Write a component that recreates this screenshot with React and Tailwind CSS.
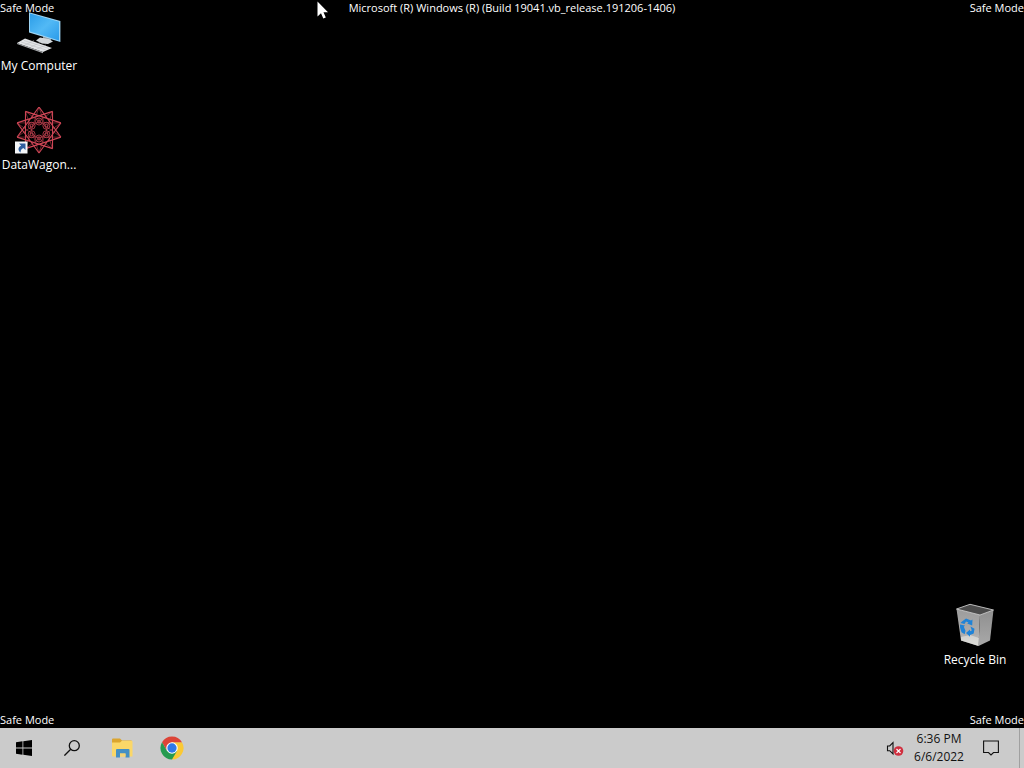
function starPath(cx, cy, r, n, step, phase) {
  let d = "";
  for (let i = 0; i < n; i++) {
    const a = phase + (i * 2 * Math.PI) / n;
    const b = phase + ((i + step) * 2 * Math.PI) / n;
    d += `M${cx + r * Math.cos(a)} ${cy + r * Math.sin(a)}L${cx + r * Math.cos(b)} ${cy + r * Math.sin(b)}`;
  }
  return d;
}

function ComputerIcon() {
  return (
    <svg viewBox="0 0 48 48" className="size-12" aria-hidden="true">
      <defs>
        <linearGradient id="screen" x1="0" y1="0" x2="1" y2="1">
          <stop offset="0" stopColor="#2b9de8" />
          <stop offset="0.5" stopColor="#52b9f5" />
          <stop offset="1" stopColor="#2a9bea" />
        </linearGradient>
      </defs>
      <path d="M28 27l8 3v4l-8-2z" fill="#8b9299" />
      <path d="M21 32.5l4-3 9 1.500 4 2.500-5 2.500-6-.5z" fill="#d3d7da" />
      <path d="M14 4.200L45.400 13v21L14 24.400z" fill="#9ed4f3" />
      <path d="M15 5.600L44 13.800v18.600L15 23.400z" fill="url(#screen)" />
      <path d="M2 35l8-4.400L37 40l-9 4z" fill="#e3e5e7" />
      <path d="M2 35l26 9v1.200L2 36z" fill="#a6a9ac" />
      <path d="M6 34l25 8M9 32.500l25 8M10 37l9-4.500M16 39l9-4.500M22 41l9-4" stroke="#b6b9bc" strokeWidth=".5" fill="none" />
    </svg>
  );
}

function WagonIcon() {
  const rings = [0, 1, 2, 3, 4, 5];
  return (
    <svg viewBox="0 0 48 48" className="size-12" aria-hidden="true">
      <g fill="none" stroke="#cc4555">
        <path d={starPath(24, 23, 23, 10, 3, -Math.PI / 2)} strokeWidth="1.100" />
        <path d={starPath(24, 23, 23, 10, 4, -Math.PI / 2)} strokeWidth=".7" opacity=".75" />
        {rings.map((i) => {
          const a = Math.PI / 2 + (i * Math.PI) / 3;
          const x = 24 + 8.5 * Math.cos(a);
          const y = 23 + 8.5 * Math.sin(a);
          return (
            <g key={i} strokeWidth=".9" opacity=".9">
              <circle cx={x} cy={y} r="3.500" />
              <circle cx={x} cy={y} r="1.500" />
            </g>
          );
        })}
      </g>
      <circle cx="24" cy="23" r="4" fill="#000" />
      <path d="M0 34.500h12.500V46.500H0z" fill="#f4f6f8" />
      <path d="M4 36.500h6.500V43L8.300 40.900C6 42.200 5.500 43.500 5.600 45.500 2.600 43.500 2.800 40 6.200 38.700z" fill="#2f5f9f" />
    </svg>
  );
}

function BinIcon() {
  return (
    <svg viewBox="0 0 48 48" className="size-12" aria-hidden="true">
      <defs>
        <linearGradient id="bin-left" x1="0" y1="0" x2="0" y2="1">
          <stop offset="0" stopColor="#9c9c9c" />
          <stop offset=".7" stopColor="#aeaeae" />
          <stop offset="1" stopColor="#cfcfcd" />
        </linearGradient>
        <linearGradient id="bin-right" x1="0" y1="0" x2="0" y2="1">
          <stop offset="0" stopColor="#8f8f8f" />
          <stop offset="1" stopColor="#a9a9a9" />
        </linearGradient>
      </defs>
      <path d="M5.500 7L19 2.300 42.500 8 29 13z" fill="#4b4b4b" />
      <path d="M5.500 7L29 13l-1.500 31L10 38.500z" fill="url(#bin-left)" />
      <path d="M29 13l13.500-5L39 38.500 27.500 44z" fill="url(#bin-right)" />
      <path d="M10 35l9-2 9 3-.5 8L10 38.500z" fill="#e4e3df" opacity=".65" />
      <path d="M5.500 7L19 2.300 42.500 8 29 13z" fill="none" stroke="#c9c9c9" strokeWidth=".9" />
      <g fill="#1e83d8">
        <path d="M11 19.500l4-3 5 2 1.500-1-.3 6-5-2 1.300-1-2.500-1-1.500 2.500-4-1z" />
        <path d="M9 22.500l5 1-1.200 1.200 1.700 4-.8 3.500-3.200-2-1.500-5z" />
        <path d="M19.500 24.500l4 2.300-.8 4.700-3.700 1.500v1.800l-4-3.800 4-3.500v1.700l1.800-.6z" />
      </g>
    </svg>
  );
}

function DesktopItem({ label, children }) {
  return (
    <button type="button" className="flex w-[78px] flex-col items-center gap-0.5">
      {children}
      <span className="leading-4 whitespace-nowrap">{label}</span>
    </button>
  );
}

function TaskButton({ label, children }) {
  return (
    <button type="button" aria-label={label} className="flex h-10 w-12 items-center justify-center">
      {children}
    </button>
  );
}

function Taskbar() {
  return (
    <footer className="flex h-10 items-stretch justify-between bg-[#cbcbcb] text-[#111]">
      <nav className="flex" aria-label="Taskbar">
        <TaskButton label="Start">
          <svg viewBox="0 0 16 16" className="size-4" fill="#000">
            <path d="M0 2.200L6.500 1.300V7.600H0zM7.300 1.200L16 0V7.600H7.300zM0 8.400H6.500V14.700L0 13.800zM7.300 8.400H16V16L7.300 14.800z" />
          </svg>
        </TaskButton>
        <TaskButton label="Search">
          <svg viewBox="0 0 16 16" className="size-4" fill="none" stroke="#111" strokeWidth="1.300">
            <circle cx="10.300" cy="5.700" r="5" />
            <path d="M6.700 9.300L.4 15.600" />
          </svg>
        </TaskButton>
        <div className="flex gap-0.5 pl-0.5">
          <TaskButton label="File Explorer">
            <svg viewBox="0 0 22 20" className="h-5 w-[22px]">
              <path d="M1 1.500Q1 .5 2 .5H9L11 2.500H20Q21 2.500 21 3.500V17.500H1z" fill="#dba52f" />
              <path d="M1 4.500H9L11 2.800H20.500Q21.500 2.800 21.500 4V18.500H2Q1 18.500 1 17.500z" fill="#fbd768" />
              <path d="M5 19.500V12Q5 11 6 11H17.500Q18.500 11 18.500 12V19.500H14.500V15.500H9V19.500z" fill="#4590c4" />
              <path d="M9 15.500h5.500v3H9z" fill="#f4d478" />
            </svg>
          </TaskButton>
          <TaskButton label="Google Chrome">
            <svg viewBox="0 0 48 48" className="size-6">
              <path d="M24 24L43.920 12.500A23 23 0 0 1 24 47z" fill="#fbc934" />
              <path d="M24 12.500H43.920L33.960 29.750z" fill="#fbc934" />
              <path d="M24 12.500H43.920A23 23 0 0 0 4.080 12.500L14.040 29.750z" fill="#dc4437" />
              <path d="M14.040 29.750L4.080 12.500A23 23 0 0 0 24 47L33.960 29.750z" fill="#259b50" />
              <circle cx="24" cy="24" r="11.500" fill="#fff" />
              <circle cx="24" cy="24" r="9.300" fill="#3079e8" />
            </svg>
          </TaskButton>
        </div>
      </nav>
      <div className="flex items-stretch">
        <button type="button" aria-label="Volume: no audio device" className="flex w-7 items-center justify-center">
          <svg viewBox="0 0 18 16" className="h-4 w-[18px]">
            <path d="M1.500 6H3.700L7 2.700V14L3.700 10.700H1.500z" fill="none" stroke="#111" strokeWidth="1.100" />
            <circle cx="12.500" cy="11" r="4.800" fill="#d02f3f" />
            <path d="M10.500 9l4 4M14.500 9l-4 4" stroke="#fff" strokeWidth="1.100" />
          </svg>
        </button>
        <button type="button" className="flex w-[60px] flex-col items-center justify-center leading-[18px]">
          <span>6:36 PM</span>
          <span>6/6/2022</span>
        </button>
        <button type="button" aria-label="Notifications" className="flex w-11 items-center justify-center">
          <svg viewBox="0 0 16 16" className="size-4" fill="none" stroke="#111" strokeWidth="1.100">
            <path d="M.6 1H15.400V12.500H10.500L8 15 5.500 12.500H.6z" />
          </svg>
        </button>
        <button type="button" aria-label="Show desktop" className="ml-1.5 w-[5px] border-l border-[#a0a0a0]" />
      </div>
    </footer>
  );
}

export default function App() {
  return (
    <div className="flex min-h-screen flex-col bg-black font-['Open_Sans','Noto_Sans',sans-serif] text-[12px] text-white">
      <main className="relative flex flex-1 justify-between">
        <div className="flex flex-col gap-[33px] pt-2">
          <DesktopItem label="My Computer"><ComputerIcon /></DesktopItem>
          <DesktopItem label="DataWagon..."><WagonIcon /></DesktopItem>
        </div>
        <div className="flex items-end pr-2.5 pb-[60px]">
          <DesktopItem label="Recycle Bin"><BinIcon /></DesktopItem>
        </div>
        <div className="pointer-events-none absolute inset-0 flex flex-col justify-between text-[11px] leading-4">
          <div className="flex justify-between">
            <span>Safe Mode</span>
            <span>Microsoft (R) Windows (R) (Build 19041.vb_release.191206-1406)</span>
            <span>Safe Mode</span>
          </div>
          <div className="flex justify-between">
            <span>Safe Mode</span>
            <span>Safe Mode</span>
          </div>
        </div>
        <svg viewBox="0 0 12 19" className="pointer-events-none absolute top-0 left-[317px] h-[19px] w-3" aria-hidden="true">
          <path d="M.5 1.500V16.500L4 13.200 6.300 18.500 8.800 17.400 6.500 12.200H11z" fill="#fff" />
        </svg>
      </main>
      <Taskbar />
    </div>
  );
}
